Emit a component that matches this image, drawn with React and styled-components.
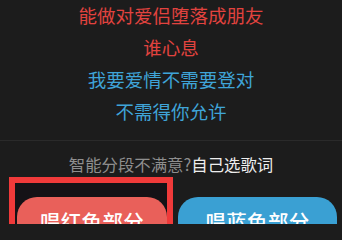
import React from "react";
import styled, { createGlobalStyle } from "styled-components";

const GlobalStyle = createGlobalStyle`
  html, body {
    margin: 0;
    padding: 0;
    background: #1c1c1c;
    overflow: hidden;
  }
  body {
    font-family: "Noto Sans CJK SC", "Noto Sans", sans-serif;
  }
`;

const Screen = styled.div`
  width: 342px;
  height: 224px;
  background: #1c1c1c;
  overflow: hidden;
`;

const Lyrics = styled.div`
  height: 140px;
  display: flex;
  flex-direction: column;
  align-items: center;
  border-bottom: 1px solid #2a2a2a;
  overflow: hidden;
`;

const LyricLine = styled.div`
  font-size: 18.5px;
  line-height: 32px;
  color: ${(p) => (p.$tone === "red" ? "#e2433f" : "#3fa4d8")};
  white-space: nowrap;
  &:first-child {
    margin-top: -1px;
  }
`;

const Hint = styled.div`
  padding-top: 13px;
  height: 20px;
  line-height: 20px;
  font-size: 16.4px;
  text-align: center;
  color: #8e8e8e;
  white-space: nowrap;

  b {
    font-weight: 400;
    color: #ededed;
  }
`;

const ButtonRow = styled.div`
  margin-top: 3px;
  padding-left: 9px;
  display: flex;
  align-items: flex-start;
`;

const Highlight = styled.div`
  border: 6px solid #f03a3a;
  border-bottom: none;
  padding: 14px 0 0 2px;
  background: #141216;
`;

const SingButton = styled.button`
  width: ${(p) => p.$width}px;
  height: 48px;
  margin: 0;
  margin-left: ${(p) => p.$offset || 0}px;
  margin-top: ${(p) => p.$top || 0}px;
  border: none;
  border-radius: 20px;
  background: ${(p) => (p.$tone === "red" ? "#e9605a" : "#3aa0d3")};
  color: #ffffff;
  font-family: "Noto Sans CJK SC", "Noto Sans", sans-serif;
  font-size: 20.5px;
  font-weight: 500;
  letter-spacing: 0.3px;
  line-height: 47px;
  padding: 0;
  text-align: center;
  white-space: nowrap;
`;

const lines = [
  { text: "能做对爱侣堕落成朋友", tone: "red" },
  { text: "谁心息", tone: "red" },
  { text: "我要爱情不需要登对", tone: "blue" },
  { text: "不需得你允许", tone: "blue" },
];

export default function App() {
  return (
    <>
      <GlobalStyle />
      <Screen>
        <Lyrics>
          {lines.map((l) => (
            <LyricLine key={l.text} $tone={l.tone}>
              {l.text}
            </LyricLine>
          ))}
        </Lyrics>
        <Hint>
          智能分段不满意?<b>自己选歌词</b>
        </Hint>
        <ButtonRow>
          <Highlight>
            <SingButton $tone="red" $width={150}>
              唱红色部分
            </SingButton>
          </Highlight>
          <SingButton $tone="blue" $width={159} $offset={5} $top={20}>
            唱蓝色部分
          </SingButton>
        </ButtonRow>
      </Screen>
    </>
  );
}
